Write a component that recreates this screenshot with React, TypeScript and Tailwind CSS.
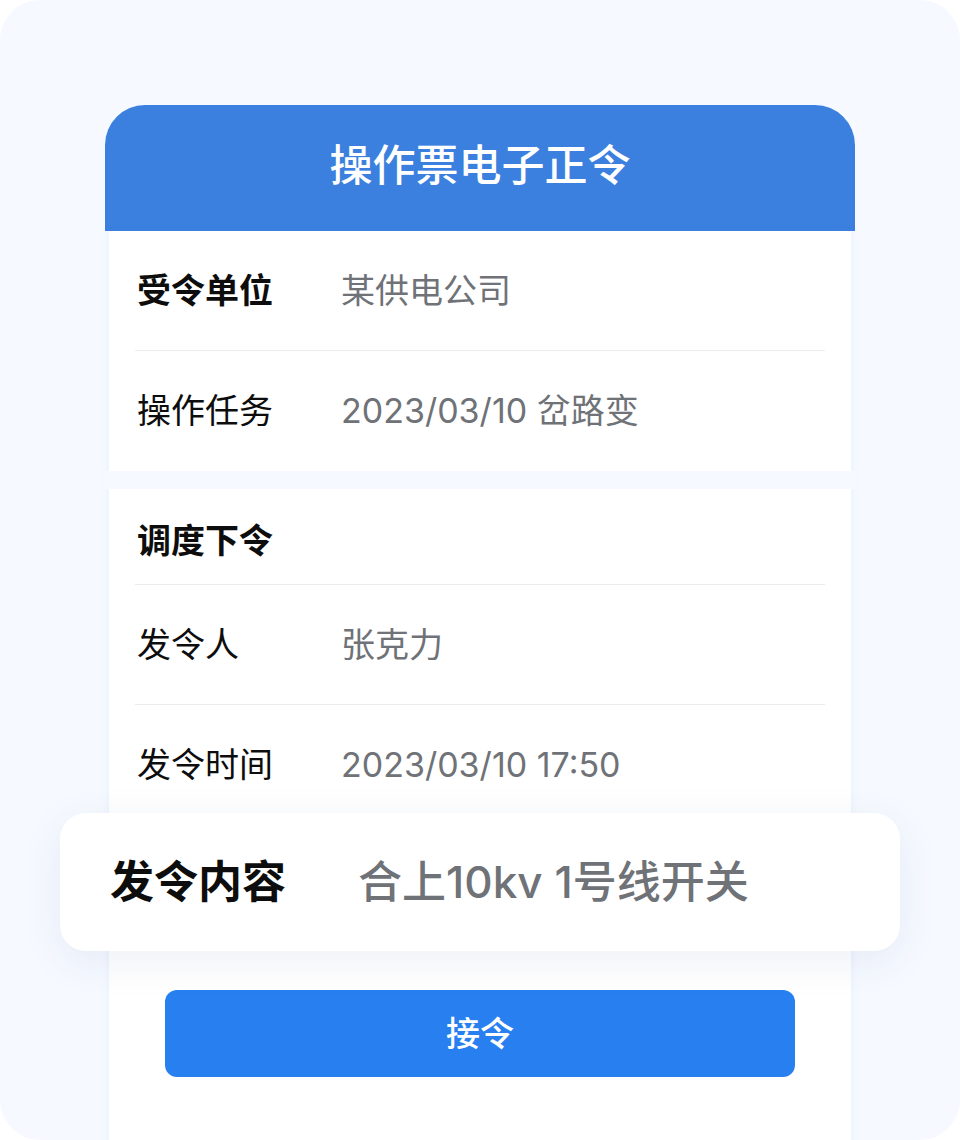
import React from "react";

// Fila de datos del ticket
interface RowProps {
  label: string;
  value?: string;
  bold?: boolean;
  last?: boolean;
}

function Row({ label, value, bold, last }: RowProps) {
  return (
    <div
      className={`flex items-center h-[120px] ${last ? "" : "border-b border-[#ececec]"}`}
    >
      <div
        className={`w-[206px] pl-[2px] text-[34px] leading-none text-[#0d0d0d] ${bold ? "font-bold" : "font-normal"}`}
      >
        {label}
      </div>
      {value && <div className="text-[34px] leading-none text-[#6f7277]">{value}</div>}
    </div>
  );
}

export default function App() {
  return (
    <div
      className="w-[960px] h-[1140px] bg-white"
      style={{ fontFamily: 'Inter, "Noto Sans CJK SC", sans-serif' }}
    >
      <div className="h-full rounded-[40px] bg-[#f6f9ff] overflow-hidden pt-[105px] px-[105px]">
        {/* Cabecera */}
        <div className="h-[126px] rounded-t-[40px] bg-[#3b80de] flex items-center justify-center pb-[6px]">
          <h1 className="text-[43px] leading-none font-medium text-white">操作票电子正令</h1>
        </div>

        {/* Cuerpo */}
        <div className="mx-[4px] bg-white shadow-[0_0_8px_rgba(59,128,222,0.07)] pb-[200px]">
          <div className="px-[26px]">
            <Row label="受令单位" value="某供电公司" bold />
            <Row label="操作任务" value="2023/03/10 岔路变" last />
          </div>

          <div className="h-[18px] bg-[#f6f9ff] -mx-[4px]" />

          <div className="px-[26px]">
            <div className="border-b border-[#ececec] pt-[35px] pb-[26px]">
              <div className="pl-[2px] text-[34px] leading-[34px] font-bold text-[#0d0d0d]">调度下令</div>
            </div>
            <Row label="发令人" value="张克力" />
            <Row label="发令时间" value="2023/03/10 17:50" last />
          </div>

          {/* Tarjeta destacada */}
          <div className="-mx-[49px] -mt-[12px] relative h-[138px] rounded-[26px] bg-white shadow-[0_10px_40px_rgba(40,70,130,0.08)] flex items-center pl-[48px]">
            <div className="w-[250px] pl-[2px] text-[44px] leading-none font-bold text-[#0d0d0d]">发令内容</div>
            <div className="text-[44px] leading-none font-medium text-[#6f7277]">合上10kv 1号线开关</div>
          </div>

          <div className="px-[56px] pt-[39px]">
            <button className="w-full h-[87px] rounded-[12px] bg-[#2880f0] text-white text-[34px] font-medium">
              接令
            </button>
          </div>
        </div>
      </div>
    </div>
  );
}
